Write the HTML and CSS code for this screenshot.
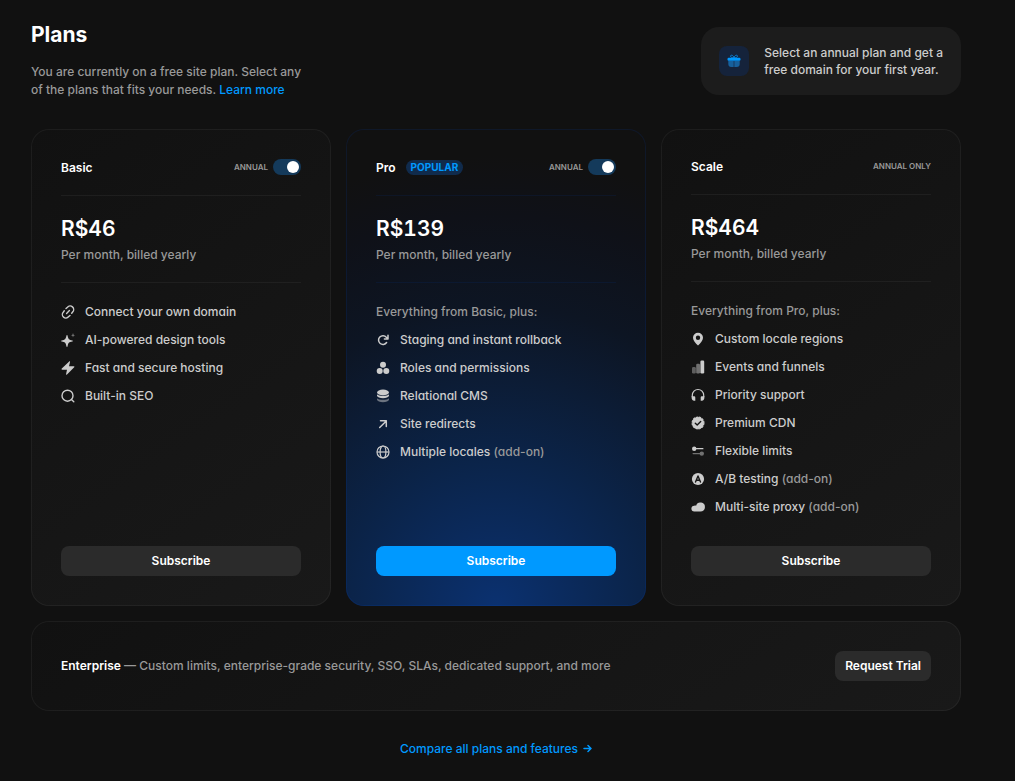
FILE: index.html
```html
<!DOCTYPE html>
<html lang="en">
<head>
    <meta charset="UTF-8">
    <meta name="viewport" content="width=device-width, initial-scale=1.0">
    <title>Plans</title>
    <link rel="stylesheet" href="styles.css">
</head>
<body>
    <main class="page">
        <header class="page-header">
            <div class="intro">
                <h1>Plans</h1>
                <p>You are currently on a free site plan. Select any of the plans that fits your needs. <a href="#">Learn more</a></p>
            </div>
            <aside class="offer">
                <span class="offer-icon">
                    <svg width="14" height="14" viewBox="0 0 14 14" fill="none">
                        <path d="M7 4C5.500 4 3.500 3.300 3.500 2.200C3.500 .7 6.500 .7 7 4C7.500 .7 10.500 .7 10.500 2.200C10.500 3.300 8.500 4 7 4Z" stroke="#0b7fd4" stroke-width="1"/>
                        <rect x=".5" y="3.800" width="13" height="3" rx="1.200" fill="#0099ff"/>
                        <path d="M1.300 7H6.700V13H4.300A3 3 0 0 1 1.300 10ZM7.300 7H12.700V10A3 3 0 0 1 9.700 13H7.300Z" fill="#17609c"/>
                    </svg>
                </span>
                <p>Select an annual plan and get a<br>free domain for your first year.</p>
            </aside>
        </header>

        <div class="plans">
            <section class="card">
                <div class="card-head">
                    <h2>Basic</h2>
                    <label class="billing">Annual <input class="toggle" type="checkbox" role="switch" checked></label>
                </div>
                <div class="price">
                    <strong>R$46</strong>
                    <span>Per month, billed yearly</span>
                </div>
                <ul class="features">
                    <li>
                        <svg viewBox="0 0 14 14" fill="none" stroke="currentColor" stroke-width="1.400" stroke-linecap="round"><path d="M5 3.500L6.500 2.200A3.300 3.300 0 0 1 11.800 6.800L10.700 8.200M9 10.500L7.500 11.800A3.300 3.300 0 0 1 2.200 7.200L3.300 5.800M5.600 8.400L8.400 5.600"/></svg>
                        Connect your own domain
                    </li>
                    <li>
                        <svg viewBox="0 0 14 14" fill="currentColor"><path d="M6 2C6.300 2 6.500 2.300 6.600 2.700C7.300 6.200 7.900 6.700 11.300 7.400C12.200 7.600 12.200 8.400 11.300 8.600C7.900 9.300 7.300 9.800 6.600 13.300C6.400 14.200 5.600 14.200 5.400 13.300C4.700 9.800 4.100 9.300 .7 8.600C-.2 8.400 -.2 7.600 .7 7.400C4.100 6.700 4.700 6.200 5.400 2.700C5.500 2.300 5.700 2 6 2Z"/><path opacity=".6" d="M12 0L12.500 1.800L14 2.300L12.500 2.800L12 4.600L11.500 2.800L10 2.300L11.500 1.800Z"/></svg>
                        AI-powered design tools
                    </li>
                    <li>
                        <svg viewBox="0 0 14 14" fill="currentColor"><path d="M8.200 .6C8.800 -.1 9.200 .2 9 1L8 5.200H12.700C13.500 5.200 13.700 5.700 13.200 6.300L6 13.500C5.300 14.100 4.900 13.800 5.100 13L6 8.700H1.300C.5 8.700 .3 8.200 .8 7.600Z"/></svg>
                        Fast and secure hosting
                    </li>
                    <li>
                        <svg viewBox="0 0 14 14" fill="none" stroke="currentColor" stroke-width="1.400" stroke-linecap="round"><circle cx="6.500" cy="6.700" r="5.500"/><path d="M10.700 10.800L12.800 12.800"/></svg>
                        Built-in SEO
                    </li>
                </ul>
                <button class="button" type="button">Subscribe</button>
            </section>

            <section class="card card-pro">
                <div class="card-head">
                    <h2>Pro</h2>
                    <span class="tag">POPULAR</span>
                    <label class="billing">Annual <input class="toggle" type="checkbox" role="switch" checked></label>
                </div>
                <div class="price">
                    <strong>R$139</strong>
                    <span>Per month, billed yearly</span>
                </div>
                <ul class="features">
                    <li class="lead">Everything from Basic, plus:</li>
                    <li>
                        <svg viewBox="0 0 14 14" fill="none" stroke="currentColor" stroke-width="1.500" stroke-linecap="round" stroke-linejoin="round"><path d="M10.600 9.500A4.400 4.400 0 1 1 10.300 4.200L11.800 5.700M12 2.300V5.900H8.400"/></svg>
                        Staging and instant rollback
                    </li>
                    <li>
                        <svg viewBox="0 0 14 14" fill="currentColor"><circle cx="7" cy="3.800" r="3"/><circle cx="3.700" cy="10" r="3"/><circle cx="10.300" cy="10" r="3"/></svg>
                        Roles and permissions
                    </li>
                    <li>
                        <svg viewBox="0 0 14 14" fill="currentColor"><ellipse cx="7" cy="3.400" rx="6" ry="2.800"/><path d="M1 5.200C2.500 7.300 11.500 7.300 13 5.200V6.700C12.500 10 1.500 10 1 6.700Z"/><path opacity=".5" d="M1 9.200C2.500 11.300 11.500 11.300 13 9.200V10.500C12.500 14 1.500 14 1 10.500Z"/></svg>
                        Relational CMS
                    </li>
                    <li>
                        <svg viewBox="0 0 14 14" fill="none" stroke="currentColor" stroke-width="1.500" stroke-linecap="round" stroke-linejoin="round"><path d="M3.700 10.500L10.300 4M4.500 3.800H10.300V9.500"/></svg>
                        Site redirects
                    </li>
                    <li>
                        <svg viewBox="0 0 14 14" fill="none" stroke="currentColor" stroke-width="1.200"><circle cx="7" cy="7" r="6"/><ellipse cx="7" cy="7" rx="2.900" ry="6"/><path d="M1 7H13"/></svg>
                        <span>Multiple locales <em>(add-on)</em></span>
                    </li>
                </ul>
                <button class="button button-primary" type="button">Subscribe</button>
            </section>

            <section class="card">
                <div class="card-head">
                    <h2>Scale</h2>
                    <span class="billing">Annual only</span>
                </div>
                <div class="price">
                    <strong>R$464</strong>
                    <span>Per month, billed yearly</span>
                </div>
                <ul class="features">
                    <li class="lead">Everything from Pro, plus:</li>
                    <li>
                        <svg viewBox="0 0 14 14" fill="currentColor" fill-rule="evenodd"><path d="M7 .8A5 5 0 0 1 12 5.800C12 8.500 9.500 11.500 7 13.400C4.500 11.500 2 8.500 2 5.800A5 5 0 0 1 7 .8ZM7 3.600A2.200 2.200 0 1 0 7 8A2.200 2.200 0 1 0 7 3.600Z"/></svg>
                        Custom locale regions
                    </li>
                    <li>
                        <svg viewBox="0 0 14 14" fill="currentColor"><rect x="1" y="7" width="3.800" height="6.500" rx="1.200" opacity=".4"/><rect x="5.200" y="3.800" width="3.800" height="9.700" rx="1.200" opacity=".5"/><rect x="9.400" y=".6" width="3.800" height="12.900" rx="1.200"/></svg>
                        Events and funnels
                    </li>
                    <li>
                        <svg viewBox="0 0 14 14" fill="currentColor"><path d="M1.300 9V7.200A5.700 5.700 0 0 1 12.700 7.200V9" fill="none" stroke="currentColor" stroke-width="1.200"/><path d="M.6 8.300H3.200Q4.300 8.300 4.300 9.500V12.800H3.200Q.6 12.500 .6 9.500ZM13.400 8.300H10.800Q9.700 8.300 9.700 9.500V12.800H10.800Q13.400 12.500 13.400 9.500Z"/></svg>
                        Priority support
                    </li>
                    <li>
                        <svg viewBox="0 0 14 14" fill="currentColor"><circle cx="7" cy="7" r="5.900"/><circle cx="7" cy="7" r="5.900" fill="none" stroke="currentColor" stroke-width="1.200" stroke-dasharray="2.400 .7"/><path class="cut" d="M4.300 7.200L6.200 9L9.700 5.400"/></svg>
                        Premium CDN
                    </li>
                    <li>
                        <svg viewBox="0 0 14 14" fill="currentColor"><circle cx="3.200" cy="4.700" r="2.200"/><rect x="3" y="4.100" width="9.500" height="1.200" rx=".6"/><g opacity=".5"><circle cx="10.800" cy="9.600" r="2.200"/><rect x="1.500" y="9" width="9" height="1.200" rx=".6"/></g></svg>
                        Flexible limits
                    </li>
                    <li>
                        <svg viewBox="0 0 14 14" fill="currentColor"><circle cx="7" cy="7" r="6.100"/><path class="cut" d="M4.500 10L7 4L9.500 10M5.400 8.200H8.600"/></svg>
                        <span>A/B testing <em>(add-on)</em></span>
                    </li>
                    <li>
                        <svg viewBox="0 0 14 14" fill="currentColor"><path d="M3.300 5.700C4 5.500 4.500 5.600 5.100 5.700A4.500 4.500 0 1 1 9.500 11.500H3.300A2.900 2.900 0 0 1 3.300 5.700Z"/></svg>
                        <span>Multi-site proxy <em>(add-on)</em></span>
                    </li>
                </ul>
                <button class="button" type="button">Subscribe</button>
            </section>

            <section class="card enterprise">
                <p><strong>Enterprise</strong> — Custom limits, enterprise-grade security, SSO, SLAs, dedicated support, and more</p>
                <button class="button" type="button">Request Trial</button>
            </section>
        </div>

        <a class="compare" href="#">
            Compare all plans and features
            <svg width="9" height="9" viewBox="0 0 9 9" fill="none" stroke="currentColor" stroke-width="1.500" stroke-linecap="round" stroke-linejoin="round"><path d="M1 4.500H8M5 1.500L8 4.500L5 7.500"/></svg>
        </a>
    </main>
</body>
</html>
```
FILE: styles.css
```css
* {
    box-sizing: border-box;
}

body {
    margin: 0;
    background: #111;
    color: #999;
    font: 500 12px/18px Inter, "Liberation Sans", sans-serif;
}

h1, h2, p, ul {
    margin: 0;
    padding: 0;
}

a {
    color: #0099ff;
    text-decoration: none;
}

.page {
    padding: 22px 54px 24px 31px;
}

/* header */
.page-header {
    display: flex;
    align-items: center;
    justify-content: space-between;
    margin-bottom: 30px;
}

.intro {
    max-width: 285px;
}

.intro h1 {
    margin-bottom: 15px;
    color: #fff;
    font-size: 21px;
    font-weight: 700;
    line-height: 26px;
}

.offer {
    display: flex;
    align-items: center;
    gap: 15px;
    padding: 17px 18px;
    border-radius: 18px;
    background: #1c1c1c;
    color: #ccc;
    line-height: 17px;
}

.offer-icon {
    display: grid;
    place-items: center;
    width: 30px;
    height: 30px;
    border-radius: 8px;
    background: #15233b;
}

/* cards */
.plans {
    display: grid;
    grid-template-columns: repeat(3, 1fr);
    gap: 15px;
}

.card {
    display: flex;
    flex-direction: column;
    padding: 30px;
    border-radius: 18px;
    background: linear-gradient(145deg, #111, #191919);
    box-shadow: inset 0 0 0 1px rgba(255, 255, 255, 0.05);
}

.card-pro {
    background: radial-gradient(circle at 50% 100%, #0b3170, #0b2347 155px, #0d1523 300px, #0f1118 390px, #111 450px);
    box-shadow: inset 0 0 0 1px rgba(0, 85, 255, 0.1);
}

.card-head {
    display: flex;
    align-items: center;
    padding-bottom: 20px;
    border-bottom: 1px solid rgba(255, 255, 255, 0.05);
    line-height: 15px;
}

.card-head h2 {
    color: #fff;
    font-size: 12px;
    font-weight: 600;
}

.tag {
    margin-left: 10px;
    padding: 0 5px;
    border-radius: 8px;
    background: #102b4c;
    color: #0099ff;
    font-size: 10px;
    font-weight: 700;
}

.billing {
    display: flex;
    align-items: center;
    gap: 5px;
    margin-left: auto;
    font-size: 8px;
    font-weight: 600;
    text-transform: uppercase;
}

.toggle {
    appearance: none;
    display: flex;
    justify-content: flex-end;
    width: 28px;
    height: 16px;
    margin: 0;
    padding: 2px;
    border-radius: 8px;
    background: #143a5b;
}

.toggle::before {
    content: "";
    width: 12px;
    height: 12px;
    border-radius: 50%;
    background: #fff;
}

.toggle:not(:checked) {
    justify-content: flex-start;
    background: #333;
}

.price {
    display: grid;
    gap: 5px;
    padding: 20px 0;
    border-bottom: 1px solid rgba(255, 255, 255, 0.05);
    line-height: 15px;
}

.price strong {
    color: #fff;
    font-size: 21px;
    font-weight: 600;
    font-variant-numeric: tabular-nums;
    line-height: 26px;
}

.card-pro .card-head,
.card-pro .price {
    border-color: rgba(0, 85, 255, 0.08);
}

.features {
    display: grid;
    gap: 10px;
    margin: 20px 0 30px;
    color: #ccc;
    font-feature-settings: "cv11";
    list-style: none;
}

.features li {
    display: flex;
    align-items: center;
    gap: 10px;
}

.features .lead,
.features em {
    color: #999;
    font-style: normal;
}

.features svg {
    width: 14px;
    height: 14px;
}

.cut {
    fill: none;
    stroke: #161616;
    stroke-width: 1.4px;
    stroke-linecap: round;
    stroke-linejoin: round;
}

.button {
    height: 30px;
    margin-top: auto;
    padding: 0 10px;
    border: 0;
    border-radius: 8px;
    background: #2b2b2b;
    color: #fff;
    font: inherit;
    font-weight: 600;
    cursor: pointer;
}

.button-primary {
    background: #0099ff;
}

.enterprise {
    grid-column: 1 / -1;
    flex-direction: row;
    align-items: center;
    justify-content: space-between;
}

.enterprise strong {
    color: #fff;
    font-weight: 600;
}

.compare {
    display: flex;
    align-items: center;
    justify-content: center;
    gap: 5px;
    margin-top: 30px;
    line-height: 15px;
}
```
